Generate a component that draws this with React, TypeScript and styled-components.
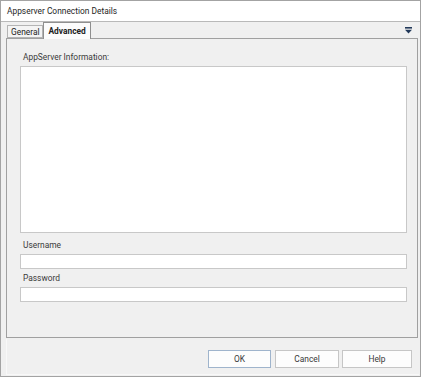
import styled, { createGlobalStyle } from "styled-components";

const Global = createGlobalStyle`
  html, body { margin: 0; background: #fff; }
  body { font-family: Roboto, "Noto Sans", "DejaVu Sans", sans-serif; }
`;

const Dialog = styled.div`
  width: 421px;
  height: 377px;
  box-sizing: border-box;
  border: 1px solid #a3a3a3;
  background: #f0f0f0;
  display: flex;
  flex-direction: column;
`;

const TitleBar = styled.div`
  height: 20px;
  flex: none;
  background: #fff;
  border-bottom: 1px solid #b9b9b9;
  display: flex;
  align-items: center;
  padding-left: 6px;
  font-size: 8.4px;
  color: #1e1e1e;
`;

const TabStrip = styled.div`
  height: 16px;
  flex: none;
  display: flex;
  align-items: flex-end;
  padding: 0 8px 0 6px;
  position: relative;
  z-index: 1;
`;

const Tab = styled.div<{ $active?: boolean }>`
  box-sizing: border-box;
  height: ${(p) => (p.$active ? "17px" : "13px")};
  margin-bottom: ${(p) => (p.$active ? "-1px" : "0")};
  padding: 0 ${(p) => (p.$active ? "4px" : "3px")};
  border: 1px solid ${(p) => (p.$active ? "#8f8f8f" : "#b4b4b4")};
  border-bottom: ${(p) => (p.$active ? "none" : "1px solid #b4b4b4")};
  background: ${(p) => (p.$active ? "#fcfcfc" : "#f4f4f4")};
  font-size: 8.4px;
  font-weight: ${(p) => (p.$active ? 700 : 400)};
  color: #222;
  display: flex;
  align-items: center;
`;

const StripIcon = styled.div`
  margin-left: auto;
  align-self: center;
  display: flex;
`;

const Panel = styled.div`
  height: 300px;
  flex: none;
  box-sizing: border-box;
  margin: 0 2px 0 5px;
  border: 1px solid #a0a0a0;
  padding: 12px 10px 0 13px;
  display: flex;
  flex-direction: column;
`;

const Label = styled.div<{ $top?: number }>`
  font-size: 8.4px;
  line-height: 12px;
  color: #3a3a3a;
  padding-left: 3px;
  margin-top: ${(p) => p.$top ?? 0}px;
  margin-bottom: 3px;
`;

const InfoBox = styled.div`
  height: 167px;
  box-sizing: border-box;
  background: #fff;
  border: 1px solid #c8c8c8;
`;

const Field = styled.div`
  height: 15px;
  box-sizing: border-box;
  background: #fff;
  border: 1px solid #c8c8c8;
`;

const Footer = styled.div`
  flex: 1;
  margin: 1px 1px 1px 5px;
  border-left: 1px solid #f8f8f8;
  border-bottom: 1px solid #f8f8f8;
  display: flex;
  justify-content: flex-end;
  align-items: flex-start;
  padding: 11px 7px 0 0;
`;

const Button = styled.div<{ $w: number; $gap?: number; $default?: boolean }>`
  width: ${(p) => p.$w}px;
  height: 18px;
  box-sizing: border-box;
  margin-left: ${(p) => p.$gap ?? 0}px;
  border: 1px solid ${(p) => (p.$default ? "#9fb4cc" : "#c6c6c6")};
  background: #fdfdfd;
  font-size: 8.4px;
  color: #3a3a3a;
  display: flex;
  align-items: center;
  justify-content: center;
`;

function MenuArrow() {
  return (
    <svg width="7" height="7" viewBox="0 0 7 7">
      <rect x="0" y="0" width="7" height="1.6" fill="#22395a" />
      <polygon points="0,2.8 7,2.8 3.5,6.6" fill="#22395a" />
    </svg>
  );
}

export default function App() {
  return (
    <>
      <Global />
      <Dialog>
        <TitleBar>Appserver Connection Details</TitleBar>
        <TabStrip>
          <Tab>General</Tab>
          <Tab $active>Advanced</Tab>
          <StripIcon>
            <MenuArrow />
          </StripIcon>
        </TabStrip>
        <Panel>
          <Label>AppServer Information:</Label>
          <InfoBox />
          <Label $top={6}>Username</Label>
          <Field />
          <Label $top={3}>Password</Label>
          <Field />
        </Panel>
        <Footer>
          <Button $w={63} $default>OK</Button>
          <Button $w={64} $gap={4}>Cancel</Button>
          <Button $w={70} $gap={3}>Help</Button>
        </Footer>
      </Dialog>
    </>
  );
}
